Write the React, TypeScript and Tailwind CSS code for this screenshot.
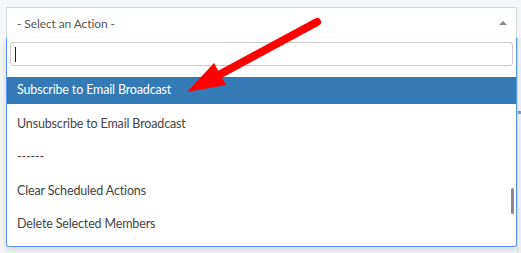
export default function App() {
  const options = [
    'Unsubscribe to Email Broadcast',
    '------',
    'Clear Scheduled Actions',
    'Delete Selected Members',
  ];

  return (
    <div className="relative h-[253px] w-[521px] overflow-hidden bg-[#f4f5f7] pl-[6px] pt-[7px] font-['Lato',sans-serif] text-[12px]">
      <div className="w-[511px]">
        {/* select header */}
        <div className="flex h-[31px] items-center justify-between border border-b-0 border-[#d2d6de] bg-white pl-[10px] pr-[9px]">
          <span className="pt-[1px] tracking-[-0.1px] text-[#555]">- Select an Action -</span>
          <span className="mb-[1px] h-0 w-0 border-x-[4px] border-b-[4px] border-x-transparent border-b-[#888]" />
        </div>

        {/* dropdown */}
        <div className="relative h-[209px] rounded-b-[3px] border border-t-0 border-[#5897fb] bg-white shadow-[0_3px_6px_rgba(0,0,0,0.12)]">
          <div className="px-[3px] pt-[4px]">
            <div className="flex h-[24px] items-center rounded-[3px] border border-[#cbcbcb] px-[4px]">
              <span className="h-[15px] w-px bg-[#222]" />
            </div>
          </div>
          <ul className="mt-[11px] flex flex-col gap-[6.5px] text-[12.5px] tracking-[-0.15px]">
            <li className="flex h-[27px] items-center bg-[#337ab7] pl-[10px] text-white">
              Subscribe to Email Broadcast
            </li>
            {options.map((o) => (
              <li key={o} className="flex h-[27px] items-center pl-[10px] text-[#444]">
                {o}
              </li>
            ))}
          </ul>
          <div className="absolute right-[2px] top-[150px] h-[26px] w-[3px] rounded-sm bg-[#8a8a8a]" />
        </div>
      </div>

      {/* edge of the panel behind */}
      <div className="absolute right-0 top-[38px] h-[215px] w-[4px] border-l border-[#cfd8e3] bg-[#e9edf2]">
        <div className="mt-[73px] h-[3px] w-full bg-[#7b9fc9]" />
      </div>

      {/* red annotation arrow */}
      <svg className="pointer-events-none absolute left-0 top-0" width="521" height="253">
        <line x1="317" y1="22" x2="215" y2="77" stroke="#ff0000" strokeWidth="8" strokeLinecap="round" />
        <polygon points="187,92 214,63 226,85" fill="#ff0000" />
      </svg>
    </div>
  );
}
